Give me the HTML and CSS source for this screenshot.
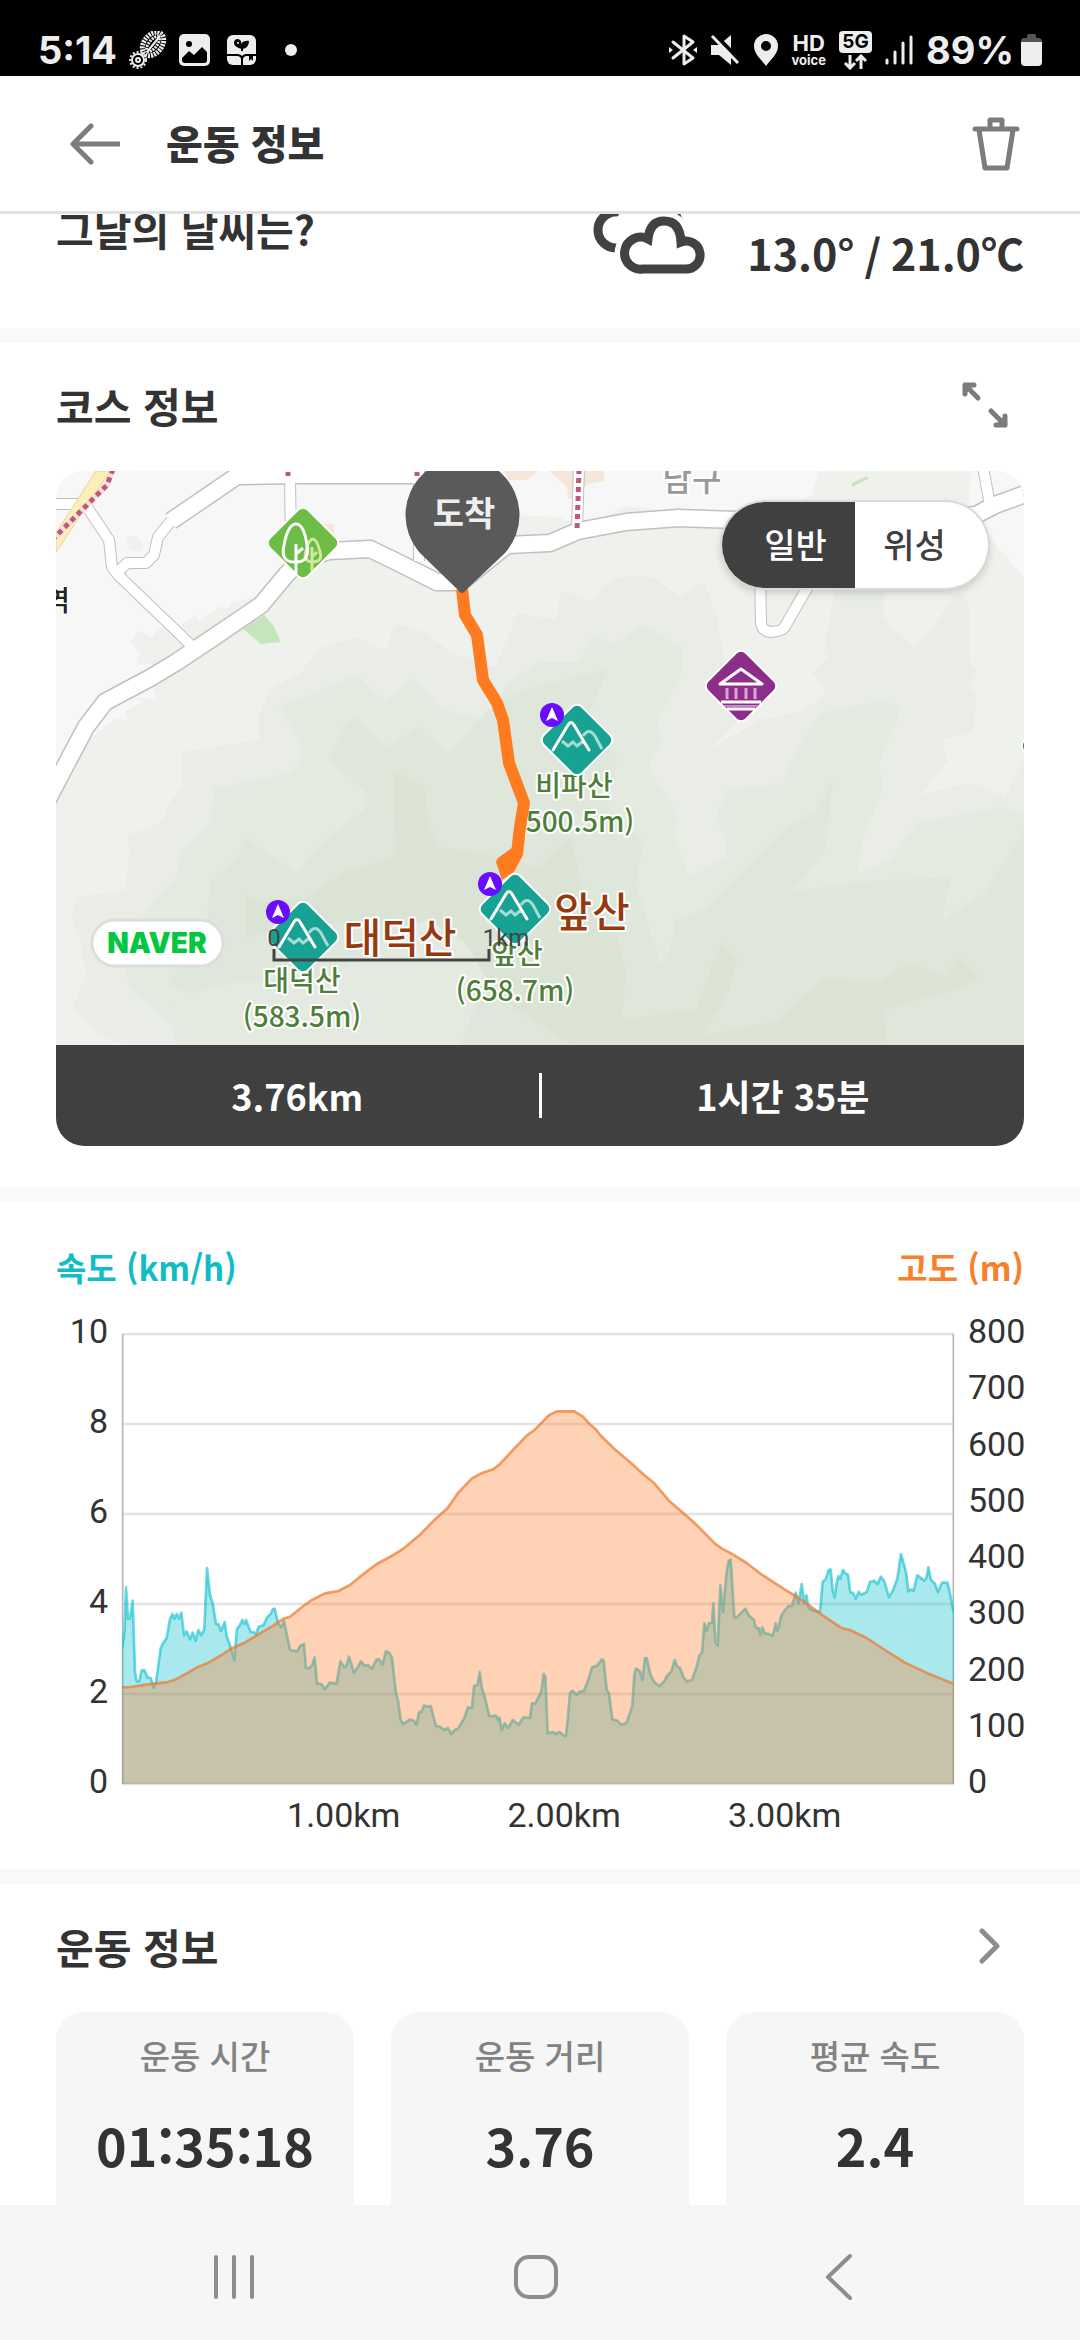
FILE: index.html
```html
<!DOCTYPE html>
<html lang="ko">
  <head>
    <meta charset="utf-8">
    <meta name="viewport" content="width=device-width, initial-scale=1">
    <title>운동 정보</title>
    <link rel="stylesheet" href="styles.css">
  </head>
  <body>
    <div class="statusbar">
      <div class="status-left">
        <span class="status-text">5:14</span>
        <svg class="shoe" width="38" height="38" viewBox="0 0 38 38" fill="none" stroke="#eee">
          <ellipse cx="24" cy="13" rx="9" ry="13" transform="rotate(38 24 13)" stroke-width="5" stroke-dasharray="2 1"/>
          <ellipse cx="24" cy="13" rx="4" ry="9" transform="rotate(38 24 13)" stroke-width="3" stroke-dasharray="2 1"/>
          <path d="M18 21L31 5" stroke-width="2"/>
          <circle cx="9" cy="29" r="6" stroke-width="2"/>
          <circle cx="9" cy="29" r="8" stroke-width="2" stroke-dasharray="2 2"/>
          <circle cx="9" cy="29" r="2" stroke-width="2"/>
        </svg>
        <svg class="gallery" width="32" height="32" viewBox="0 0 32 32">
          <rect x="0" y="0" width="31" height="32" rx="5" fill="#eee"/>
          <circle cx="10" cy="10" r="3" fill="#000"/>
          <path d="M3 24L10 17L15 21L23 13L28 18V26Q28 29 25 29H6Q3 29 3 26Z" fill="#000"/>
        </svg>
        <svg class="plant" width="30" height="30" viewBox="0 0 30 30">
          <rect x="0" y="0" width="29" height="30" rx="6" fill="#eee"/>
          <path d="M15 16V12" stroke="#000" stroke-width="2"/>
          <path d="M15 14Q7 12 7 8Q7 4 11 4Q15 5 14 9Q17 5 22 6Q22 13 15 14Z" fill="#000"/>
          <circle cx="11" cy="8" r="1" fill="#eee"/>
          <path d="M0 20H11Q15 21 15 24Q15 21 19 20H29M15 22V30" fill="none" stroke="#000" stroke-width="2"/>
          <path d="M22 21H26V26L24 24L22 26Z" fill="#000"/>
        </svg>
        <svg class="dot" width="12" height="12" viewBox="0 0 12 12"><circle cx="6" cy="6" r="6" fill="#eee"/></svg>
      </div>
      <div class="status-right">
        <svg width="28" height="34" viewBox="0 0 28 34" fill="none" stroke="#eee" stroke-width="3" stroke-linejoin="round" stroke-linecap="round">
          <path d="M4 9L24 25L15 31V3L24 9L4 25"/>
          <path d="M0 14L4 17L0 20ZM28 14L24 17L28 20Z" fill="#eee" stroke="none"/>
        </svg>
        <svg width="30" height="32" viewBox="0 0 30 32">
          <path d="M1 11H9L21 1V31L9 21H1Z" fill="#eee"/>
          <path d="M4 0L30 26" stroke="#000" stroke-width="4"/>
          <path d="M2 2L28 29" stroke="#eee" stroke-width="3"/>
        </svg>
        <svg width="26" height="32" viewBox="0 0 26 32">
          <path d="M13 0A12 12 0 0 0 1 12C1 20 8 25 13 32C18 25 25 20 25 12A12 12 0 0 0 13 0ZM13 7A5 5 0 1 1 13 17A5 5 0 1 1 13 7Z" fill="#eee" fill-rule="evenodd"/>
        </svg>
        <div class="hd"><span>HD</span><small>voice</small></div>
        <div class="net">
          <span>5G</span>
          <svg width="24" height="16" viewBox="0 0 24 16" fill="none" stroke="#eee" stroke-width="3"><path d="M7 1V14M2 9L7 14L12 9M18 15V2M13 7L18 2L23 7"/></svg>
        </div>
        <svg width="28" height="32" viewBox="0 0 28 32" stroke="#eee" stroke-width="3" stroke-linecap="round">
          <path d="M2 26V29M10 18V29M18 9V29M26 3V29"/>
        </svg>
        <span class="status-text">89%</span>
        <svg class="battery" width="21" height="32" viewBox="0 0 21 32">
          <path d="M6 2Q6 0 8 0H13Q15 0 15 2V4H18Q21 4 21 8H0Q0 4 3 4H6Z" fill="#555"/>
          <path d="M0 8H21V28Q21 32 17 32H4Q0 32 0 28Z" fill="#eee"/>
        </svg>
      </div>
    </div>

    <header class="topbar">
      <button class="icon-button" aria-label="뒤로">
        <svg width="52" height="42" viewBox="0 0 52 42" fill="none" stroke="#7c7c7c" stroke-width="5">
          <path d="M21 3L3 21L21 39" stroke-linecap="round" stroke-linejoin="round"/>
          <path d="M3 21H50"/>
        </svg>
      </button>
      <h1>운동 정보</h1>
      <button class="icon-button" aria-label="삭제">
        <svg width="48" height="54" viewBox="0 0 48 54" fill="none" stroke="#7c7c7c" stroke-width="5" stroke-linejoin="round" stroke-linecap="round">
          <path d="M3 12H45M18 11V3H30V11M7 13L13 51H35L41 13"/>
        </svg>
      </button>
    </header>

    <main>
      <section class="weather">
        <h2>그날의 날씨는?</h2>
        <svg class="weather-icon" width="112" height="84" viewBox="0 0 112 84" fill="none" stroke="#424242" stroke-width="9">
          <path d="M28 58H24A18 18 0 0 1 5 40A18 18 0 0 1 22 22Q30 3 52 5Q76 6 88 36"/>
          <path d="M50 79A16 16 0 1 1 55 49Q57 31 71 31Q87 31 88 52A14 14 0 1 1 92 79Z" fill="#fff" stroke="#fff" stroke-width="20"/>
          <path d="M50 79A16 16 0 1 1 55 49Q57 31 71 31Q87 31 88 52A14 14 0 1 1 92 79Z" fill="#fff"/>
        </svg>
        <p class="temps">13.0° / 21.0℃</p>
      </section>

      <section>
        <div class="section-head">
          <h2>코스 정보</h2>
          <button class="icon-button expand" aria-label="지도 확대">
            <svg width="48" height="48" viewBox="0 0 48 48" fill="none" stroke="#7c7c7c" stroke-width="5" stroke-linecap="round" stroke-linejoin="round">
              <path d="M4 13V4H13M4 4L17 17M44 35V44H35M44 44L30 30"/>
              <path d="M3 3H14L3 14ZM45 45H34L45 34Z" fill="#7c7c7c" stroke-width="1"/>
            </svg>
          </button>
        </div>
        <div class="course">
          <div class="map">
            <svg class="map-canvas" viewBox="0 0 968 574">
              <defs>
                <g id="mountain">
                  <rect x="-27" y="-27" width="54" height="54" rx="7" transform="rotate(45)" fill="#18a293" stroke="#fff" stroke-width="2"/>
                  <path d="M-15 1L-9 6L-4 2L0 6L5 2L8 3M6 -4Q12 -13 18 -4L25 9" fill="none" stroke="#a5dcd5" stroke-width="3"/>
                  <path d="M-24 10L-9 -15Q-6 -20 -3 -15L12 10" fill="none" stroke="#fff" stroke-width="3" stroke-linecap="round"/>
                  <circle cx="-25" cy="-25" r="12" fill="#6a0cff"/>
                  <path d="M-25 -33L-19 -19L-25 -22L-31 -19Z" fill="#fff"/>
                </g>
                <!-- road shapes are stroked twice: outline, then surface -->
                <g id="roads-wide">
                  <path d="M-8 328L14 286L30 256L49 231L94 207L119 192L158 166L205 134L230 104L244 89L273 80L314 78L337 89L381 111L405 111L451 74L494 72L522 60L570 51L622 47L680 49L800 54L920 44L939 34L972 22"/>
                  <path d="M115 50L181 5L240 4H362"/>
                </g>
                <g id="roads-narrow">
                  <path d="M31 36L53 69L56 96L62 104L137 176M-5 33H31M234 4L235 80M363 0V90M115 50L102 66L98 84L90 92H71L61 102M523 -4L521 58M927 -4L934 34M704 100L705 152Q706 160 715 161Q726 160 728 157L754 112"/>
                </g>
              </defs>

              <rect width="968" height="574" fill="#f7f7f7"/>
              <path fill="#eff1ec" d="M0 325L26 275L60 247L72 250L68 240L85 232L80 226L102 228L94 207L101 194L80 192L85 182L74 171L82 160L96 166L103 156L123 156L139 144L144 151L162 136L173 137V132L199 126L230 104L244 89L314 78L381 111H405L451 74L458 44L505 46L522 60L570 35L680 49L730 38L756 24L763 0H915L912 44L935 69L968 106V574H0Z"/>
              <path fill="#eff1ec" d="M71 66L80 65L87 74L84 80L75 79L71 73ZM484 46L516 50L518 60L488 70Z"/>
              <path fill="#e9ede6" d="M126 289V281L203 269V242L215 217L242 204L265 177L301 166L330 179Q336 156 342 154Q372 158 394 182L439 196L462 142L501 149L505 119L536 131Q552 106 567 106Q590 104 598 107L625 127Q640 112 649 112L661 146L668 186L690 238L673 259L653 279L704 249L739 242Q765 230 770 222L756 201L773 186Q768 176 770 166L780 117H828V149L858 177L883 149Q896 122 904 122Q912 130 913 136V189L921 202L913 216L921 226L916 262L886 269L892 289L865 324L915 312L949 326L968 286V574H69L40 562L17 536L30 502L23 466L15 446L21 426L69 419L74 379L71 366L108 349L110 336L126 316Z"/>
              <path fill="#e4eae0" d="M155 572L115 552L73 516L65 469L123 402V386L155 349L158 317L234 302Q250 288 243 270L223 236L258 222L301 204L330 231L357 207L383 236L430 250L450 214L484 191L522 191L536 166L560 171L587 154L625 176V206L601 249L605 269L593 296L604 316L621 342L619 369L633 406L671 386V366L659 349L671 319L726 312L743 276L764 242L827 229L846 236L823 292L827 319L806 369L802 402L835 389L861 352L945 336L968 342V574Z"/>
              <path fill="#dfe7db" d="M290 252L301 246L330 276L362 256L394 282L431 240L455 224L500 210L552 198L530 250L562 288L552 335L588 370L580 412L604 492Q616 490 618 450L652 436L730 356L760 340L777 305L770 378L736 420L820 410L895 406L886 450L930 420L968 360V574H155L190 538L112 516L151 446L155 409L183 386L190 366L240 402L269 369L308 339V319L272 289Z"/>
              <path fill="#dbe3d4" d="M337 299L369 316L372 350L383 376L425 382L482 396L515 366L524 409L541 439L561 462L570 499L566 549L640 538L665 472L682 490L670 528L646 565L722 549L768 506L823 512L852 492L890 506L901 486L924 506L900 519L827 539L831 574H515L461 539L420 500L360 455L260 452L190 466L190 424L206 432L251 426L290 400L340 386Z"/>
              <path fill="#e4eae0" d="M266 510L370 448L408 470L430 506L405 574H120L112 530L180 510Z"/>
              <path fill="#c5e6bd" d="M187 158L208 144L217 154L225 171L205 173ZM796 12L811 5L812 8L796 16Z"/>
              <path fill="#f4e6da" d="M493 0H548V10L532 13L513 29L511 16ZM448 0H483L470 9H453ZM267 53H278V62H267Z"/>

              <g fill="none" stroke="#c0c0c0" stroke-linejoin="round">
                <use href="#roads-wide" stroke-width="19"/>
                <use href="#roads-narrow" stroke-width="12"/>
              </g>
              <g fill="none" stroke="#fff" stroke-linejoin="round">
                <use href="#roads-wide" stroke-width="16"/>
                <use href="#roads-narrow" stroke-width="10"/>
              </g>
              <path d="M40 0H54L0 81V62Z" fill="#fdefb8" stroke="#e3d3a0"/>
              <path d="M57 -2L51 14L37 28L-3 68" fill="none" stroke="#f7dfdc" stroke-width="6"/>
              <path d="M57 -2L51 14L37 28L-3 68M523 -2L521 60M232 1V5M361 1V5" fill="none" stroke="#c0587a" stroke-width="5" stroke-dasharray="5 4"/>

              <g class="place">
                <text class="district" x="636" y="20">남구</text>
                <text class="station" x="14" y="140">역</text>
                <text x="518" y="325">비파산</text>
                <text x="519" y="361">(500.5m)</text>
                <text x="461" y="493">앞산</text>
                <text x="459" y="530">(658.7m)</text>
                <text x="246" y="520">대덕산</text>
                <text x="246" y="556">(583.5m)</text>
                <text class="peak" x="344" y="482">대덕산</text>
                <text class="peak" x="536" y="456">앞산</text>
              </g>

              <path d="M406 118L409 144L421 164L427 209L441 232L447 249L453 292L468 332L464 356L461 383" fill="none" stroke="#ff7b1f" stroke-width="12" stroke-linejoin="round"/>
              <path d="M457 376L442 387Q439 390 441 394L446 409L458 401L467 384Z" fill="#ff7b1f"/>

              <use href="#mountain" x="521" y="269"/>
              <use href="#mountain" x="459" y="438"/>
              <use href="#mountain" x="247" y="466"/>
              <g transform="translate(247 72)">
                <rect x="-27" y="-27" width="54" height="54" rx="7" transform="rotate(45)" fill="#6cbc45" stroke="#fff" stroke-width="2"/>
                <path d="M9 28V4M9 19Q0 18 3 8Q6 -4 10 -4Q14 -4 17 9Q20 19 9 19M9 14L14 9" fill="none" stroke="#cfe7a0" stroke-width="3"/>
                <path d="M-7 31V1M-7 19Q-23 20 -19 2Q-15 -19 -7 -19Q1 -19 4 2Q7 19 -7 19M-7 11L0 5" fill="none" stroke="#fff" stroke-width="3"/>
              </g>
              <g transform="translate(685 215)">
                <rect x="-27" y="-27" width="54" height="54" rx="7" transform="rotate(45)" fill="#8e2e8b" stroke="#fff" stroke-width="2"/>
                <path d="M-21 -2L0 -17L21 -2Z" fill="none" stroke="#fff" stroke-width="3" stroke-linejoin="round"/>
                <path d="M-14 2V13M-5 2V13M5 2V13M14 2V13" stroke="#d9a6d7" stroke-width="3"/>
                <path d="M-20 16H20M-14 23H14" stroke="#fff" stroke-width="3"/>
                <path d="M-17 20H17" stroke="#c58ac3" stroke-width="2"/>
              </g>
              <circle cx="975" cy="275" r="9" fill="#3f7a3a" stroke="#fff" stroke-width="2"/>

              <path d="M406 122Q404 122 401 118L364 82A57 57 0 1 1 449 82L411 118Q408 122 406 122Z" fill="#5a5a5a"/>
              <text class="pin-label" x="408" y="55">도착</text>

              <path d="M218 478V489H433V478" fill="none" stroke="#444" stroke-width="3"/>
              <text class="scale" x="218" y="475">0</text>
              <text class="scale" x="450" y="475">1km</text>
              <rect x="36" y="449" width="131" height="46" rx="23" fill="#fff" stroke="#dcdfd9" stroke-width="3"/>
              <text class="naver" x="101" y="482">NAVER</text>
            </svg>
            <div class="map-type">
              <button class="active" aria-pressed="true">일반</button>
              <button aria-pressed="false">위성</button>
            </div>
          </div>
          <div class="course-total">
            <span>3.76km</span>
            <span>1시간 35분</span>
          </div>
        </div>
      </section>

      <section class="chart">
        <div class="legend">
          <span class="speed">속도 (km/h)</span>
          <span class="altitude">고도 (m)</span>
        </div>
        <div class="chart-body">
          <div class="ticks left">
            <span>10</span><span>8</span><span>6</span><span>4</span><span>2</span><span>0</span>
          </div>
          <svg class="plot" viewBox="36 -618 2496 1350">
            <defs>
              <clipPath id="plot-area"><rect x="36" y="-618" width="2496" height="1350"/></clipPath>
            </defs>
            <path class="grid" d="M36 -618H2532M36 -348H2532M36 -78H2532M36 192H2532M36 462H2532M36 732H2532"/>
            <path class="axis" d="M38 -618V732M2530 -618V732"/>
            <g clip-path="url(#plot-area)">
              <path class="speed-area" d="M10 760V318H38L44 270L48 142L54 236H60L68 182L75 395L80 424H88L95 392L103 390L112 412L122 414L131 443L138 428L152 325L160 308L170 294L180 238L187 222L193 236L200 222L206 236L214 218L222 286L230 274L240 298L248 278L257 302L265 270L274 286L283 268L291 84L300 165L308 190L318 252H325L333 273L344 246L350 288L362 322L373 360L381 266L388 258L397 240L403 252L408 240L422 276H430L438 282L446 260L460 256L473 230L482 222L488 208L494 206L504 250L514 262L522 242L530 282L540 330L562 334L570 318L582 312L588 384H598L606 376L614 352L621 430L634 432L645 448L658 428L680 430L691 364L702 380H708L717 350L732 398L744 380L753 364L762 376H774L786 386L800 358H808L817 374L828 334L838 338L846 354L858 460L864 480L872 540L880 552L900 538L912 542L920 554L927 516H934L942 496L950 500L962 498L978 558L990 560L1003 570L1014 564L1023 582L1034 570L1044 566L1062 536L1074 502L1086 504L1092 438L1103 434L1109 396L1116 445L1124 470L1138 528H1150L1157 526L1164 540L1168 532L1175 570L1184 550L1195 564L1208 540L1226 554L1240 532L1260 534L1266 490H1276L1294 454L1301 402L1306 410L1313 580L1328 576L1338 582L1348 576L1364 588L1368 586L1374 530L1380 458L1387 452L1400 464L1408 456L1422 452L1436 416L1446 382L1460 378L1476 358L1481 362L1490 448L1497 460L1507 538L1522 542L1534 554L1550 548L1560 518L1567 498L1573 404L1578 386L1590 394L1597 420L1605 354H1610L1622 406L1634 428L1649 438L1662 424L1672 406L1684 394L1694 360L1702 380L1710 384L1720 410L1730 424L1746 420L1760 380L1768 346L1776 338L1783 250L1790 272L1797 250L1806 246L1810 190L1816 305L1823 316L1831 136L1839 216L1850 95L1856 64L1862 58L1866 120L1873 232H1880L1892 220L1906 206L1916 226L1932 240L1938 264H1946L1951 284L1957 262L1964 280L1978 282L1987 288L1992 274L1997 250L2003 272L2014 226L2025 210L2035 198H2046L2057 158L2066 190L2075 132L2083 190L2089 166L2096 204L2110 212L2130 216L2138 126L2148 116L2156 90L2162 88L2168 150L2174 172L2180 130L2185 108L2191 116L2199 90L2206 100L2214 104L2221 158H2228L2237 176L2246 156L2254 164L2270 156L2280 126L2292 122L2303 132L2312 110L2322 122L2337 172L2350 148L2362 116L2373 42L2388 96L2395 154L2403 148L2411 152L2422 106L2443 122L2450 112L2455 82L2463 120L2474 130L2484 156L2496 128H2512L2518 150L2530 214H2560V760Z"/>
              <path class="altitude-area" d="M10 760V442H38L60 441L90 437L130 431L170 427L195 419L230 400L265 380L295 368L330 348L365 325L400 310L450 280L490 257L520 236L540 230L580 198L605 180L645 160L685 153L720 135L750 110L800 72L850 45L885 22L930 -16L972 -59L1013 -96L1044 -141L1065 -163L1085 -184L1116 -201L1149 -212L1168 -226L1209 -270L1250 -313L1271 -328L1290 -347L1316 -374L1342 -386H1393L1419 -370L1440 -347L1460 -329L1471 -314L1517 -270L1569 -226L1600 -197L1631 -172L1677 -118L1755 -50L1815 11L1835 25L1870 44L1910 69L1950 100L2020 146L2060 170L2100 198L2130 220L2160 241L2195 264L2220 270L2270 294L2320 327L2385 368L2460 403L2530 431H2560V760Z"/>
            </g>
          </svg>
          <div class="ticks right">
            <span>800</span><span>700</span><span>600</span><span>500</span><span>400</span><span>300</span><span>200</span><span>100</span><span>0</span>
          </div>
          <div class="distance">
            <span>1.00km</span><span>2.00km</span><span>3.00km</span>
          </div>
        </div>
      </section>

      <section class="stats">
        <div class="section-head">
          <h2>운동 정보</h2>
          <button class="icon-button more" aria-label="자세히">
            <svg width="22" height="38" viewBox="0 0 22 38" fill="none" stroke="#8d8d8d" stroke-width="5" stroke-linecap="round" stroke-linejoin="round"><path d="M4 4L19 19L4 34"/></svg>
          </button>
        </div>
        <div class="cards">
          <div class="card"><h3>운동 시간</h3><p>01:35:18</p></div>
          <div class="card"><h3>운동 거리</h3><p>3.76</p></div>
          <div class="card"><h3>평균 속도</h3><p>2.4</p></div>
        </div>
      </section>
    </main>

    <nav>
      <button aria-label="최근 앱">
        <svg width="42" height="46" viewBox="0 0 42 46" stroke="#8d8d8d" stroke-width="4" stroke-linecap="round"><path d="M3 3V43M21 3V43M39 3V43"/></svg>
      </button>
      <button aria-label="홈">
        <svg width="46" height="46" viewBox="0 0 46 46" fill="none" stroke="#8d8d8d" stroke-width="4"><rect x="3" y="3" width="40" height="40" rx="13"/></svg>
      </button>
      <button aria-label="이전">
        <svg width="28" height="48" viewBox="0 0 28 48" fill="none" stroke="#8d8d8d" stroke-width="4" stroke-linecap="round" stroke-linejoin="round"><path d="M25 3L3 24L25 45"/></svg>
      </button>
    </nav>
  </body>
</html>
```

FILE: styles.css
```css
* {
  box-sizing: border-box;
}

body {
  display: flex;
  flex-direction: column;
  height: 100vh;
  margin: 0;
  background: #fff;
  color: #333;
  font-family: "Noto Sans CJK KR", sans-serif;
}

h1, h2, h3, p {
  margin: 0;
}

svg {
  display: block;
}

button {
  padding: 0;
  border: 0;
  background: none;
  color: inherit;
  font-family: inherit;
}

/* status bar */
.statusbar {
  display: flex;
  flex: none;
  justify-content: space-between;
  height: 76px;
  padding: 24px 38px 0;
  background: #000;
  color: #eee;
  font-family: Inter, sans-serif;
}

.status-left, .status-right {
  display: flex;
  align-items: center;
  height: 52px;
}

.status-right {
  gap: 13px;
}

.status-text {
  font-size: 38px;
  font-weight: 700;
  line-height: 52px;
}

.shoe {
  margin-left: 12px;
}

.gallery {
  margin-left: 12px;
}

.plant {
  margin-left: 16px;
}

.dot {
  margin-left: 28px;
}

.battery {
  margin-left: -6px;
}

.hd, .net {
  display: flex;
  flex-direction: column;
  align-items: center;
}

.hd {
  font-size: 22px;
  font-weight: 700;
  line-height: 20px;
}

.hd small {
  font-size: 13px;
  line-height: 14px;
}

.net {
  gap: 1px;
}

.net span {
  width: 33px;
  border-radius: 4px;
  background: #eee;
  color: #000;
  font-size: 19px;
  font-weight: 700;
  line-height: 22px;
  text-align: center;
}

/* header */
.topbar {
  display: flex;
  flex: none;
  align-items: center;
  height: 138px;
  padding: 0 60px 0 70px;
  border-bottom: 3px solid #e1e2e1;
}

.topbar h1 {
  flex: 1;
  margin-left: 44px;
  padding-bottom: 4px;
  font-size: 40px;
  font-weight: 900;
  line-height: 60px;
}

main {
  flex: 1;
  min-height: 0;
  overflow: hidden;
  background: #f9f9f9;
}

section {
  margin-bottom: 15px;
  padding: 32px 56px 41px;
  background: #fff;
}

h2 {
  font-size: 41px;
  font-weight: 700;
  line-height: 60px;
}

.section-head {
  display: flex;
  align-items: center;
  justify-content: space-between;
  margin-bottom: 36px;
}

.expand {
  margin-right: 15px;
}

.more {
  margin-right: 24px;
}

/* weather, partly scrolled under the header */
.weather {
  display: flex;
  align-items: flex-end;
  margin-top: -40px;
  padding: 16px 56px 44px;
}

.weather h2 {
  flex: 1;
  padding-bottom: 26px;
}

.weather-icon {
  margin: 0 42px 10px 0;
}

.temps {
  min-width: 272px;
  padding-bottom: 2px;
  font-size: 43px;
  font-weight: 700;
  line-height: 60px;
  text-align: right;
}

/* course */
.course {
  overflow: hidden;
  border-radius: 28px;
}

.map {
  position: relative;
}

.map-canvas {
  width: 100%;
  height: auto;
}

.map-canvas text {
  text-anchor: middle;
}

.place {
  fill: #4d7f3a;
  stroke: #fff;
  stroke-width: 4px;
  stroke-linejoin: round;
  paint-order: stroke;
  font-size: 28px;
  font-weight: 500;
}

.place .district {
  fill: #999;
  font-size: 32px;
}

.map-canvas .station {
  fill: #222;
  text-anchor: end;
}

.place .peak {
  fill: #97390f;
  font-size: 41px;
}

.pin-label {
  fill: #eee;
  font-size: 34px;
  font-weight: 700;
}

.scale {
  fill: #444;
  font-family: Roboto, sans-serif;
  font-size: 24px;
}

.naver {
  fill: #03c740;
  font-family: Inter, sans-serif;
  font-size: 28px;
  font-weight: 900;
}

.map-type {
  position: absolute;
  top: 31px;
  right: 36px;
  display: flex;
  overflow: hidden;
  border-radius: 43px;
  background: #fff;
  box-shadow: 0 0 0 2px #d8dad6, 0 4px 10px rgba(0, 0, 0, 0.2);
}

.map-type button {
  width: 133px;
  height: 86px;
  padding: 0 14px 4px 0;
  color: #404040;
  font-size: 34px;
  font-weight: 500;
}

.map-type .active {
  padding: 0 0 4px 14px;
  background: #404040;
  color: #fff;
}

.course-total {
  display: flex;
  align-items: center;
  height: 101px;
  background: #404040;
  color: #fff;
  font-size: 36px;
  font-weight: 700;
  line-height: 45px;
  text-align: center;
}

.course-total span {
  flex: 1;
}

.course-total span + span {
  border-left: 3px solid #fff;
}

/* chart */
.chart {
  padding: 40px 56px 37px;
}

.legend {
  display: flex;
  justify-content: space-between;
  margin-bottom: 22px;
  font-size: 33px;
  font-weight: 700;
  line-height: 50px;
}

.speed {
  color: #10bcc6;
}

.altitude {
  color: #f97f2b;
}

.chart-body {
  display: grid;
  grid-template-columns: 52px 1fr 56px;
  column-gap: 14px;
  font-family: Roboto, sans-serif;
  font-size: 34px;
  line-height: 34px;
}

.ticks {
  display: flex;
  flex-direction: column;
  justify-content: space-between;
}

.left {
  text-align: right;
}

.plot {
  width: 100%;
  height: auto;
  padding: 20px 0 14px;
  overflow: visible;
}

.grid {
  stroke: #e3e3e3;
  stroke-width: 8;
}

.axis {
  stroke: #b5b5b5;
  stroke-width: 5;
}

.speed-area, .altitude-area {
  fill-opacity: 0.35;
  stroke-width: 8;
  stroke-linejoin: round;
}

.speed-area {
  fill: #09c0ce;
  stroke: #09c0ce;
  stroke-opacity: 0.6;
}

.altitude-area {
  fill: #ff7c2c;
  stroke: #f0772c;
  stroke-opacity: 0.7;
}

.distance {
  display: grid;
  grid-column: 2;
  grid-template-columns: 134fr 265fr 265fr 265fr 71fr;
  text-align: center;
}

.distance::before {
  content: "";
}

/* stats */
.stats {
  margin-bottom: 0;
}

.cards {
  display: grid;
  grid-template-columns: repeat(3, 1fr);
  gap: 37px;
}

.card {
  padding: 18px 0 80px;
  border-radius: 28px;
  background: #f6f6f6;
  text-align: center;
}

.card h3 {
  color: #828282;
  font-size: 33px;
  font-weight: 500;
  line-height: 50px;
}

.card p {
  margin-top: 30px;
  font-size: 52px;
  font-weight: 700;
  line-height: 70px;
}

/* navigation */
nav {
  display: flex;
  flex: none;
  height: 135px;
  padding: 8px 90px 0 83px;
  background: #f6f6f8;
}

nav button {
  display: flex;
  flex: 1;
  align-items: center;
  justify-content: center;
}
```
